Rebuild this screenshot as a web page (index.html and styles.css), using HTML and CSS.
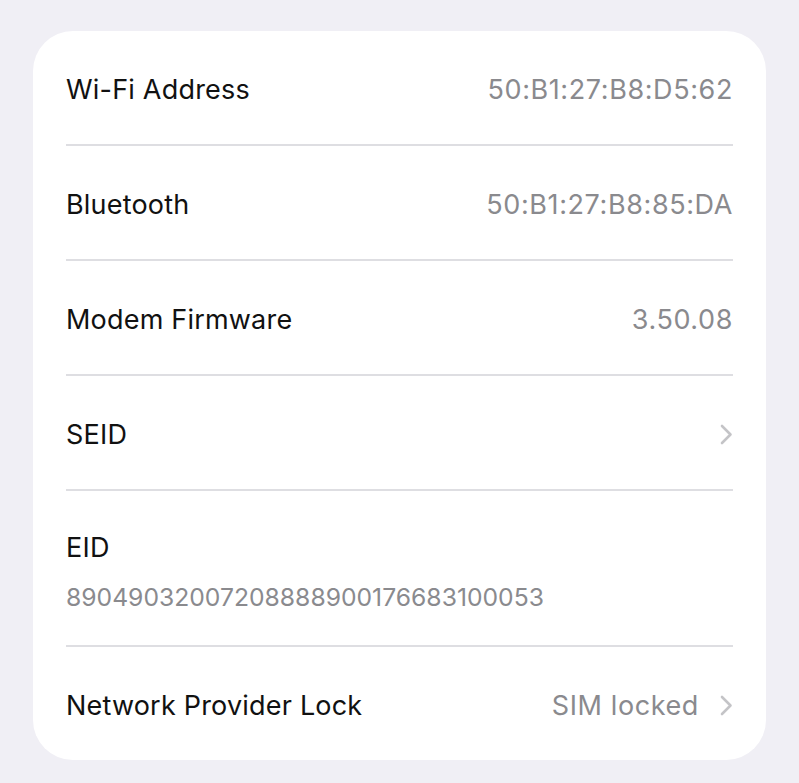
FILE: index.html
```html
<!doctype html>
<html>

<head>
    <title>About</title>
    <link rel="stylesheet" href="styles.css">
</head>

<body>
    <div class="card">
        <div class="row">
            <span class="label">Wi-Fi Address</span>
            <span class="value">50:B1:27:B8:D5:62</span>
        </div>
        <div class="row">
            <span class="label">Bluetooth</span>
            <span class="value">50:B1:27:B8:85:DA</span>
        </div>
        <div class="row">
            <span class="label">Modem Firmware</span>
            <span class="value">3.50.08</span>
        </div>
        <div class="row">
            <span class="label">SEID</span>
            <span class="value">
                <svg class="chevron" width="13" height="21" viewBox="0 0 13 21"><path d="M2 2 L10.5 10.5 L2 19" /></svg>
            </span>
        </div>
        <div class="row row-stack">
            <span class="label">EID</span>
            <span class="value">89049032007208888900176683100053</span>
        </div>
        <div class="row">
            <span class="label">Network Provider Lock</span>
            <span class="value">SIM locked
                <svg class="chevron" width="13" height="21" viewBox="0 0 13 21"><path d="M2 2 L10.5 10.5 L2 19" /></svg>
            </span>
        </div>
    </div>
</body>

</html>
```

FILE: styles.css
```css
body {
    margin: 0;
    background-color: #f0eff5;
    font-family: Inter, "Noto Sans", sans-serif;
}

.card {
    width: 733px;
    margin: 31px 0 0 33px;
    background-color: #fff;
    border-radius: 40px;
    padding-left: 33px;
    box-sizing: border-box;
}

.row {
    display: flex;
    align-items: center;
    justify-content: space-between;
    height: 115px;
    padding-top: 4px;
    margin-right: 33px;
    border-bottom: 2px solid #dedee2;
    box-sizing: border-box;
}

.row:last-child {
    border-bottom: none;
    height: 113px;
}

.row-stack {
    flex-direction: column;
    align-items: flex-start;
    justify-content: flex-start;
    height: 156px;
    padding-top: 40px;
}

.label {
    font-size: 27px;
    letter-spacing: 0.2px;
    color: #111;
}

.value {
    display: flex;
    align-items: center;
    gap: 21px;
    font-size: 27px;
    letter-spacing: 0.6px;
    color: #8a8a8e;
}

.row-stack .value {
    margin-top: 18px;
    font-size: 24.7px;
    letter-spacing: 0;
}

.chevron path {
    fill: none;
    stroke: #c4c4c7;
    stroke-width: 2.6;
    stroke-linecap: round;
    stroke-linejoin: round;
}
```
